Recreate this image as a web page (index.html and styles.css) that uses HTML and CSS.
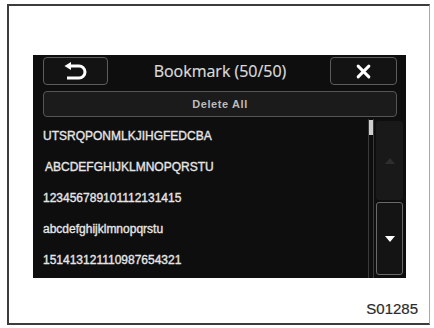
FILE: index.html
```html
<!DOCTYPE html>
<html lang="en">

<head>
    <meta charset="UTF-8">
    <title>Bookmark</title>
    <link rel="stylesheet" href="styles.css">
</head>

<body>
    <div class="frame">
        <div class="panel">
            <div class="top-bar">
                <div class="btn btn-back">
                    <svg width="28" height="20" viewBox="0 0 28 20">
                        <path d="M7 5 H17 A6 6 0 0 1 17 17 H5" fill="none" stroke="#fff" stroke-width="3"/>
                        <polygon points="2.5,5 9,1 9,9" fill="#fff"/>
                    </svg>
                </div>
                <div class="title">Bookmark (50/50)</div>
                <div class="btn btn-close">
                    <svg width="15" height="15" viewBox="0 0 14 14">
                        <path d="M2 2 L12 12 M12 2 L2 12" stroke="#fff" stroke-width="2.8" stroke-linecap="round"/>
                    </svg>
                </div>
            </div>
            <div class="delete-all">Delete All</div>
            <div class="list-area">
                <div class="list">
                    <div class="row">UTSRQPONMLKJIHGFEDCBA</div>
                    <div class="row indent">ABCDEFGHIJKLMNOPQRSTU</div>
                    <div class="row">123456789101112131415</div>
                    <div class="row">abcdefghijklmnopqrstu</div>
                    <div class="row">151413121110987654321</div>
                </div>
                <div class="track">
                    <div class="thumb"></div>
                </div>
                <div class="scroll-btns">
                    <div class="scroll-up">
                        <svg width="10" height="6" viewBox="0 0 10 6"><polygon points="0,6 10,6 5,0" fill="#2e2e2e"/></svg>
                    </div>
                    <div class="scroll-down">
                        <svg width="10" height="6" viewBox="0 0 10 6"><polygon points="0,0 10,0 5,6" fill="#fff"/></svg>
                    </div>
                </div>
            </div>
        </div>
        <div class="label">S01285</div>
    </div>
</body>

</html>
```

FILE: styles.css
```css
body {
    margin: 0;
    background-color: #fff;
    font-family: "Liberation Sans", Arial, sans-serif;
}

.frame {
    box-sizing: border-box;
    width: 423px;
    height: 321px;
    margin: 4px 0 0 7px;
    border: 2px solid #3c3c3c;
    border-right: 1px solid #a8a8a8;
    display: flex;
    flex-direction: column;
}

.panel {
    box-sizing: border-box;
    width: 373px;
    height: 223px;
    margin: 49px 0 0 24px;
    padding: 2px 3px 0 10px;
    background-color: #0e0e0e;
    display: flex;
    flex-direction: column;
}

.top-bar {
    display: flex;
    align-items: center;
    height: 28px;
    margin-right: 6px;
}

.btn {
    box-sizing: border-box;
    height: 28px;
    border: 1px solid #5c5c5c;
    border-radius: 4px;
    background-color: #131313;
    display: flex;
    align-items: center;
    justify-content: center;
}

.btn-back {
    width: 65px;
}

.btn-close {
    width: 67px;
}

.title {
    flex: 1;
    text-align: center;
    color: #dcdcdc;
    font-family: "Open Sans", "Noto Sans", sans-serif;
    font-size: 16px;
    padding-left: 2px;
    -webkit-text-stroke: 0.2px #dcdcdc;
}

.delete-all {
    box-sizing: border-box;
    height: 26px;
    margin: 6px 6px 0 0;
    border: 1px solid #555;
    border-radius: 4px;
    background-color: #1b1b1b;
    color: #bdbdbd;
    font-size: 11px;
    font-weight: bold;
    letter-spacing: 0.6px;
    display: flex;
    align-items: center;
    justify-content: center;
}

.list-area {
    display: flex;
    flex: 1;
    margin-top: 2px;
}

.list {
    flex: 1;
    padding-top: 2px;
}

.row {
    height: 31px;
    line-height: 31px;
    color: #e6e6e6;
    font-size: 12px;
    -webkit-text-stroke: 0.35px #e6e6e6;
}

.indent {
    padding-left: 2px;
}

.track {
    box-sizing: border-box;
    width: 6px;
    margin-right: 2px;
    border-left: 1px solid #3a3a3a;
    border-right: 1px solid #3a3a3a;
    padding-top: 1px;
}

.thumb {
    width: 4px;
    height: 15px;
    background-color: #cfcfcf;
}

.scroll-btns {
    width: 27px;
    display: flex;
    flex-direction: column;
    gap: 2px;
    padding-bottom: 3px;
}

.scroll-up {
    height: 79px;
    margin-top: 2px;
    background-color: #191919;
    border-radius: 3px;
    display: flex;
    align-items: center;
    justify-content: center;
}

.scroll-down {
    box-sizing: border-box;
    flex: 1;
    border: 1px solid #6a6a6a;
    border-radius: 3px;
    background-color: #141414;
    display: flex;
    align-items: center;
    justify-content: center;
}

.label {
    margin-top: auto;
    text-align: right;
    padding: 0 11px 6px 0;
    color: #2a2a2a;
    font-size: 15px;
    -webkit-text-stroke: 0.2px #2a2a2a;
}
```
